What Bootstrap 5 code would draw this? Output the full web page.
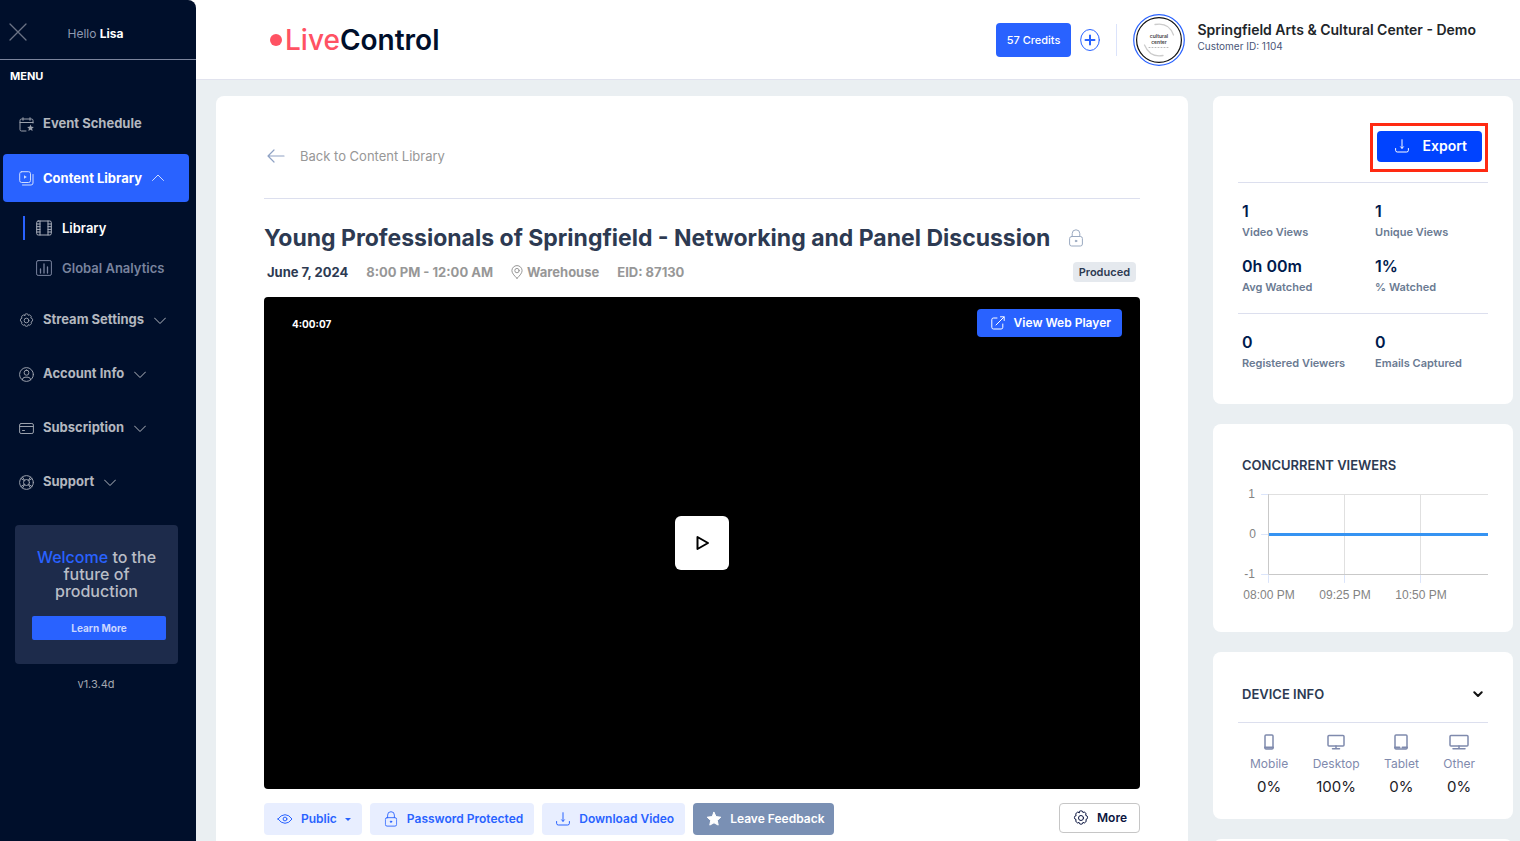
<!DOCTYPE html>
<html lang="en">
<head>
<meta charset="utf-8">
<meta name="viewport" content="width=device-width, initial-scale=1">
<title>LiveControl - Content Library</title>
<link href="https://cdn.jsdelivr.net/npm/bootstrap@5.3.0/dist/css/bootstrap.min.css" rel="stylesheet">
<style>
:root{--lc-blue:#2962ff;--lc-navy:#000f2b;--lc-ink:#2d3a52;--lc-line:#dcdfee;--lc-gray:#979797}
body{font-family:Inter,"Liberation Sans",sans-serif;font-size:14px;line-height:20px;background:#eaeff2;color:#212529}
svg{display:block;flex:none;fill:none;stroke:currentColor;stroke-linecap:round;stroke-linejoin:round}
a{text-decoration:none;color:inherit}
.btn{display:inline-flex;align-items:center;font-weight:600;font-size:12px;line-height:16px;border-radius:4px;white-space:nowrap}
.shell{height:100vh}
.corner{background:#fff}
.side{width:196px;flex:none;background:var(--lc-navy);border-radius:0 8px 0 0;height:100vh;overflow:hidden}
.side-head{height:60px;padding-top:5px;border-bottom:1px solid #7b849c;color:#8f98b0;font-size:12px}
.side-head .x-btn{background:none;border:0;padding:0;margin-left:9px;color:#6b7385}
.side-title{font-size:11px;line-height:16px;padding:8px 10px 0}
.side-nav{margin-top:15px;gap:6px}
.side-nav > a:first-child{margin-bottom:1px}
.side-link{height:48px;margin:0 7px 0 3px;padding:0 16px;border-radius:4px;font-weight:700;font-size:13px;color:#b3b7bf}
.side-link .ico{margin:2px 9px 0 0;color:#9aa0ac}
.side-link .chev{margin:3px 0 0 10px}
.side-link.current{background:var(--lc-blue);color:#fff}
.side-link.current svg{color:#cfdcff;margin-top:0}
.side-sub{padding-bottom:1px}
.side-sub a{height:40px;padding-left:36px;font-weight:600;font-size:13px;color:#79839e}
.side-sub a svg{margin-right:10px}
.side-sub a.on{color:#fff;padding-left:0}
.side-sub a.on svg{color:#aab0bd}
.side-sub a.on::before{content:"";width:2px;height:24px;background:var(--lc-blue);margin:0 11px 0 23px}
.promo{margin:20px 18px 0 15px;padding:24px 12px 24px 17px;background:#1d2b4b;border-radius:4px;color:#b9bdc6;text-align:center}
.promo p{font-size:16px;line-height:17px;font-weight:500;margin:0 5px 16px 0}
.promo p span{color:var(--lc-blue)}
.promo .btn{background:var(--lc-blue);color:#c9d6ff;font-size:10px;font-weight:700;line-height:14px;padding:5px;border:0;border-radius:2px;justify-content:center}
.ver{font-size:11px;color:#a3a7af;margin-top:10px;padding-right:4px}
.topbar{height:80px;background:#fff;border-bottom:1px solid #e1e3ee;padding:0 44px 0 74px}
.logo{font-size:28px;line-height:32px;font-weight:600;color:var(--lc-navy)}
.logo span{color:#ff5263;font-weight:500}
.logo i{width:12px;height:12px;border-radius:50%;background:#ff5263;margin-right:3px}
.credits{background:var(--lc-blue);color:#fff;font-size:11px;font-weight:500;padding:9px 11px;border:0}
.plus{border:0;background:none;padding:0;color:var(--lc-blue);margin-left:8px}
.vline{width:1px;height:32px;background:#dbe3fb;margin:0 16px 0 15px}
.org-box{padding:0 0 5px 4px}
.org{font-size:14px;line-height:18px;font-weight:600}
.cust{font-size:10px;line-height:14px;color:#4a5578}
.board{padding:16px 7px 0 20px;gap:25px;overflow-y:auto;scrollbar-width:none}
.board::-webkit-scrollbar{display:none}
.panel{background:#fff;border-radius:8px}
.main-panel{padding:48px 48px 20px}
.back{color:var(--lc-gray);font-size:13px;line-height:24px;padding-left:3px;gap:15px}
.back svg{color:#8fa2c4}
.rule{border-top:1px solid var(--lc-line)}
.rule-top{margin-top:30px;padding-top:23px}
.ttl{font-size:23px;line-height:32px;font-weight:700;color:var(--lc-ink);margin:0}
.meta{font-size:13px;font-weight:700;color:var(--lc-gray);padding-left:3px;gap:18px;margin:8px 0 15px}
.meta .when{color:var(--lc-ink)}
.tag{background:#e5e9ee;color:var(--lc-ink);font-size:11px;line-height:20px;font-weight:600;border-radius:4px;padding:0 6px}
.video{background:#000;border-radius:4px;aspect-ratio:876/492;padding:12px 18px 0 28px}
.video .time{color:#fff;font-size:10px;font-weight:700;line-height:30px}
.btn-web{background:var(--lc-blue);color:#fff;padding:6px 11px 6px 14px;border:0;gap:9px}
.play{width:54px;height:54px;border:0;background:#fff;border-radius:6px;color:#000}
.actions{padding-top:14px}
.btn-soft{background:#e8eeff;color:var(--lc-blue);padding:8px 11px 8px 13px;border:0;gap:8px}
.btn-fb{background:#7a90b4;color:#fff;padding:8px 10px 8px 13px;border:0;gap:8px}
.btn-more{background:#fff;border:1px solid #c6c6c6;color:#0b1540;padding:6px 12px;gap:7px}
.aside{width:300px;flex:none;gap:20px}
.side-card{padding:0 25px}
.stats-card{padding-bottom:25px}
.export-row{padding:27px 0 10px}
.mark-box{border:3px solid #ff2a12;padding:5px 3px 7px 4px}
.btn-export{background:#0043ff;color:#fff;font-size:14px;font-weight:600;padding:7px 15px 8px 17px;border:0;gap:13px}
.stats{padding:0 4px}
.stats-mid{padding-top:13px;padding-bottom:18px}
.stats dl{margin:0;width:55%;flex:none}
.stats dt{font-size:11px;line-height:16px;font-weight:600;color:#6a7a92}
.stats dd{margin:0;font-size:16px;line-height:26px;font-weight:600;color:#001a4d}
.rule-stats{padding-top:15px}
.card-h{font-size:13px;line-height:20px;font-weight:600;color:var(--lc-ink);margin:0;padding-left:4px}
.chart-card{padding-top:31px;padding-bottom:28px}
.chart-card .card-h{padding-bottom:7px}
.chart-txt{fill:#838383;stroke:none;font:12px "Liberation Sans",Arial,sans-serif}
.dev-head{padding:32px 5px 18px 0}
.dev{padding:11px 13px 22px 12px}
.dev div{font-size:12px;line-height:18px;color:#7f8aad}
.dev svg{margin:0 auto 5px}
.dev b{display:block;font-size:15px;line-height:20px;font-weight:400;color:#1d2127;margin-top:4px}
</style>
</head>
<body>
<svg width="0" height="0" class="position-absolute" aria-hidden="true">
  <symbol id="down" viewBox="0 0 12 8"><path d="M.5 1l5.500 5.500L11.500 1"/></symbol>
  <symbol id="gear" viewBox="0 0 16 16"><circle cx="8" cy="8" r="2.500"/><path d="M6.600 1.200q1.400-.9 2.800 0l.5 1.300 1.300-.5q1.500.5 1.900 1.900l-.6 1.300 1.600.8q.9 1 0 2.900l-1.300.8.5 1.300q-.6 1.500-2 2l-1.400-.6-.5 1.400q-1.400.9-2.800 0l-.5-1.400-1.400.6q-1.400-.5-2-2l.5-1.300-1.300-.7q-.9-1.400 0-2.900l1.300-.6-.5-1.400q.5-1.500 2-2l1.400.6z"/></symbol>
  <symbol id="lock" viewBox="0 0 14 18"><rect x=".6" y="7.500" width="12.800" height="9.500" rx="2"/><path d="M3.200 7.500V4.600a3.800 3.800 0 0 1 7.600 0v2.900"/><circle cx="7" cy="12" r=".8" fill="currentColor"/></symbol>
  <symbol id="dl" viewBox="0 0 14 14"><path d="M7 .7v8.500M5.600 7.800L7 9.400l1.400-1.600M.6 9.500v1.800q0 1.700 1.700 1.700h9.400q1.700 0 1.700-1.700V9.500"/></symbol>
</svg>
<div class="shell d-flex">
  <div class="corner">
  <aside class="side">
    <div class="side-head d-flex align-items-center">
      <button class="x-btn" aria-label="Close menu"><svg width="18" height="18" viewBox="0 0 18 18" stroke-width="1.300"><path d="M1 1l16 16M17 1L1 17"/></svg></button>
      <div class="mx-auto ps-2 pt-1 pe-3">Hello <b class="text-white">Lisa</b></div>
      <span class="pe-4"></span>
    </div>
    <div class="side-title text-white fw-bold">MENU</div>
    <nav class="side-nav d-flex flex-column" aria-label="Main">
      <a href="#" class="side-link d-flex align-items-center"><svg class="ico" width="15" height="15" viewBox="0 0 15 15"><path d="M14 6V3.500q0-1.500-1.500-1.500h-10Q1 2 1 3.500v9Q1 14 2.500 14H7M1 5.500h13M4 .7v2.600M11 .7v2.600"/><path fill="currentColor" stroke="none" d="M11.500 7.500l1 2.200 2.400.3-1.800 1.600.5 2.400-2.100-1.200L9.400 14l.5-2.400L8.100 10l2.400-.3z"/></svg>Event Schedule</a>
      <a href="#" class="side-link current d-flex align-items-center"><svg class="ico" width="15" height="15" viewBox="0 0 15 15"><rect x=".7" y=".7" width="10.800" height="10.800" rx="2"/><path d="M14 3.500V12q0 2-2 2H3.500"/><path d="M5 4.300v3.400l2.800-1.700z" fill="currentColor" stroke="none"/></svg>Content Library<svg class="chev" width="12" height="8" viewBox="0 0 12 8"><path d="M.5 6.500L6 1l5.500 5.500"/></svg></a>
      <div class="side-sub">
        <a href="#" class="on d-flex align-items-center"><svg width="16" height="16" viewBox="0 0 16 16"><rect x=".7" y="1" width="14.600" height="14" rx="1.500"/><path d="M4 1v14M12 1v14M1 4h3M1 6.700h3M1 9.400h3M1 12h3M12 4h3M12 6.700h3M12 9.400h3M12 12h3"/></svg>Library</a>
        <a href="#" class="d-flex align-items-center"><svg width="16" height="16" viewBox="0 0 16 16"><rect x=".6" y=".6" width="14.800" height="14.800" rx="1.500"/><path d="M4.500 13V9M8 13V4M11.500 13V7" stroke-width="1.300"/></svg>Global Analytics</a>
      </div>
      <a href="#" class="side-link d-flex align-items-center"><svg class="ico" width="15" height="15"><use href="#gear"/></svg>Stream Settings<svg class="chev" width="12" height="8"><use href="#down"/></svg></a>
      <a href="#" class="side-link d-flex align-items-center"><svg class="ico" width="15" height="15" viewBox="0 0 15 15"><circle cx="7.500" cy="7.500" r="6.900"/><rect x="5.200" y="3.200" width="4.600" height="5" rx="2.200"/><path d="M3.300 12.800q.3-2.600 2.700-2.600h3q2.400 0 2.700 2.600"/></svg>Account Info<svg class="chev" width="12" height="8"><use href="#down"/></svg></a>
      <a href="#" class="side-link d-flex align-items-center"><svg class="ico" width="15" height="15" viewBox="0 0 15 15"><rect x=".6" y="2.500" width="13.800" height="10" rx="1.500"/><path d="M.6 5.500h13.800M3.500 9.500h2"/></svg>Subscription<svg class="chev" width="12" height="8"><use href="#down"/></svg></a>
      <a href="#" class="side-link d-flex align-items-center"><svg class="ico" width="15" height="15" viewBox="0 0 15 15"><circle cx="7.500" cy="7.500" r="6.900"/><circle cx="7.500" cy="7.500" r="3"/><path d="M2 3.500l3.200 2M3.500 2l2 3.200M13 3.500l-3.200 2M11.500 2l-2 3.200M2 11.500l3.200-2M3.500 13l2-3.200M13 11.500l-3.200-2M11.500 13l-2-3.200"/></svg>Support<svg class="chev" width="12" height="8"><use href="#down"/></svg></a>
    </nav>
    <section class="promo">
      <p><span>Welcome</span> to the future of production</p>
      <button class="btn w-100">Learn More</button>
    </section>
    <div class="ver text-center">v1.3.4d</div>
  </aside>
  </div>

  <div class="flex-grow-1 d-flex flex-column" style="min-width:0">
    <header class="topbar d-flex align-items-center flex-shrink-0">
      <a href="#" class="logo d-flex align-items-center"><i></i><span>Live</span>Control</a>
      <button class="btn credits ms-auto">57 Credits</button>
      <button class="plus" aria-label="Add credits"><svg width="22" height="24" viewBox="0 0 22 24"><ellipse cx="11" cy="12" rx="9.300" ry="10.500"/><path d="M6.500 12h9M11 7.500v9" stroke-width="2"/></svg></button>
      <span class="vline"></span>
      <svg class="me-2" width="52" height="52" viewBox="0 0 52 52" role="img" aria-label="Cultural Center"><circle cx="26" cy="26" r="25.300" stroke="#2962ff" stroke-width="1.200"/><circle cx="26" cy="26" r="22.400" stroke="#111" stroke-width="1.200"/><path d="M22 10.500Q36 8 40.500 21M11.500 31Q17 44 30 41.500" stroke="#ccc" stroke-width="1.300"/><g fill="#444" stroke="none" font-size="5" font-weight="600" text-anchor="middle"><text x="26" y="24">cultural</text><text x="26" y="30">center</text></g><path d="M16 33.500h20" stroke="#bbb" stroke-dasharray="1 2"/></svg>
      <div class="org-box"><div class="org">Springfield Arts &amp; Cultural Center - Demo</div><div class="cust">Customer ID: 1104</div></div>
    </header>

    <div class="board d-flex align-items-start flex-grow-1">
      <main class="panel main-panel flex-grow-1">
        <a href="#" class="back d-inline-flex align-items-center"><svg width="18" height="14" viewBox="0 0 18 14" stroke-width="1.200"><path d="M17 7H1M7 1L1 7l6 6"/></svg>Back to Content Library</a>
        <div class="rule rule-top"></div>
        <div class="d-flex align-items-center gap-3"><h1 class="ttl">Young Professionals of Springfield - Networking and Panel Discussion</h1><svg width="20" height="18" style="color:#9aa9c0"><use href="#lock"/></svg></div>
        <div class="meta d-flex align-items-center">
          <span class="when">June 7, 2024</span><span>8:00 PM - 12:00 AM</span>
          <span class="d-flex align-items-center gap-1"><svg width="12" height="14" viewBox="0 0 12 14"><path d="M6 13.300Q.9 8.600.9 5.700a5.100 5.100 0 0 1 10.200 0Q11.100 8.600 6 13.300z"/><circle cx="6" cy="5.600" r="2.200"/></svg>Warehouse</span><span>EID: 87130</span>
          <span class="tag ms-auto me-1">Produced</span>
        </div>
        <section class="video position-relative" aria-label="Video player">
          <div class="d-flex justify-content-between align-items-start"><span class="time">4:00:07</span>
          <button class="btn btn-web"><svg width="14" height="14" viewBox="0 0 14 14"><path d="M6 2H2.500Q.8 2 .8 3.700v7.600q0 1.700 1.700 1.700h7.600q1.700 0 1.700-1.700V8M9.500.8h3.700v3.700M13 1L5 9"/></svg>View Web Player</button></div>
          <button class="play position-absolute top-50 start-50 translate-middle d-flex align-items-center justify-content-center" aria-label="Play"><svg width="14" height="16" viewBox="0 0 14 16" stroke-width="2"><path d="M2.500 2v12L13 8z"/></svg></button>
        </section>
        <div class="d-flex align-items-start gap-2 actions">
          <button class="btn btn-soft"><svg width="16" height="10" viewBox="0 0 16 10"><path d="M1 5q3-4.300 7-4.300T15 5q-3 4.300-7 4.300T1 5z"/><circle cx="8" cy="5" r="1.900"/></svg>Public<svg width="6" height="3" viewBox="0 0 6 3"><path d="M0 0h6L3 3z" fill="currentColor" stroke="none"/></svg></button>
          <button class="btn btn-soft"><svg width="16" height="16" viewBox="0 0 14 18"><use href="#lock"/></svg>Password Protected</button>
          <button class="btn btn-soft"><svg width="16" height="14"><use href="#dl"/></svg>Download Video</button>
          <button class="btn btn-fb"><svg width="16" height="16" viewBox="0 0 16 16"><path fill="currentColor" d="M8 1.300l2 4.300 4.800.6-3.500 3.200.9 4.700L8 11.800l-4.200 2.300.9-4.700L1.200 6.200 6 5.600z"/></svg>Leave Feedback</button>
          <button class="btn btn-more ms-auto"><svg width="18" height="16"><use href="#gear"/></svg>More</button>
        </div>
      </main>

      <aside class="aside d-flex flex-column">
        <section class="panel side-card stats-card">
          <div class="d-flex justify-content-end export-row"><div class="mark-box"><button class="btn btn-export"><svg width="16" height="14"><use href="#dl"/></svg>Export</button></div></div>
          <div class="rule rule-stats"></div>
          <div class="stats d-flex"><dl class="d-flex flex-column-reverse"><dt>Video Views</dt><dd>1</dd></dl><dl class="d-flex flex-column-reverse"><dt>Unique Views</dt><dd>1</dd></dl></div>
          <div class="stats stats-mid d-flex"><dl class="d-flex flex-column-reverse"><dt>Avg Watched</dt><dd>0h 00m</dd></dl><dl class="d-flex flex-column-reverse"><dt>% Watched</dt><dd>1%</dd></dl></div>
          <div class="rule rule-stats"></div>
          <div class="stats d-flex pb-2"><dl class="d-flex flex-column-reverse"><dt>Registered Viewers</dt><dd>0</dd></dl><dl class="d-flex flex-column-reverse"><dt>Emails Captured</dt><dd>0</dd></dl></div>
        </section>
        <section class="panel side-card chart-card">
          <h2 class="card-h">CONCURRENT VIEWERS</h2>
          <svg class="w-100" height="122" viewBox="0 0 250 122" role="img" aria-label="Concurrent viewers over time">
            <path stroke="#e0e0e0" d="M30.500 12.500H250M106.500 12.500v80M182.500 12.500v80"/>
            <path stroke="#c9c9c9" d="M30.500 12.500v80H250"/>
            <path stroke="#dbe5fb" d="M23.500 12.500h6M23.500 52.500h6M23.500 92.500h6M30.500 93.500v7M106.500 93.500v7M182.500 93.500v7"/>
            <path stroke="#3593f2" stroke-width="3" stroke-linecap="butt" d="M31 52.500h219"/>
            <g class="chart-txt"><g text-anchor="end"><text x="17" y="16">1</text><text x="18" y="56">0</text><text x="17" y="96">-1</text></g>
            <g text-anchor="middle"><text x="31" y="117">08:00 PM</text><text x="107" y="117">09:25 PM</text><text x="183" y="117">10:50 PM</text></g></g>
          </svg>
        </section>
        <section class="panel side-card">
          <div class="dev-head d-flex align-items-center justify-content-between"><h2 class="card-h">DEVICE INFO</h2><svg width="10" height="7" viewBox="0 0 10 7" stroke-width="2" style="color:#111"><path d="M1.300 1.300L5 5l3.700-3.700"/></svg></div>
          <div class="rule"></div>
          <div class="dev d-flex justify-content-between text-center">
            <div><svg width="18" height="16" viewBox="0 0 18 16" stroke-width="1.500"><rect x="5" y="1" width="8" height="14" rx="1"/><path d="M5 13.500h8" stroke-width="2"/></svg>Mobile<b>0%</b></div>
            <div><svg width="18" height="16" viewBox="0 0 18 16" stroke-width="1.500"><rect x="1" y="1.500" width="16" height="10.500" rx="1"/><path d="M9 12v2.500M5.500 14.700h7"/></svg>Desktop<b>100%</b></div>
            <div><svg width="18" height="16" viewBox="0 0 18 16" stroke-width="1.500"><rect x="3" y="1" width="12" height="14" rx="1"/><path d="M3 13.500h4.500M10.500 13.500H15" stroke-width="2"/></svg>Tablet<b>0%</b></div>
            <div><svg width="20" height="16" viewBox="0 0 20 16" stroke-width="1.500"><rect x="1" y="1.500" width="18" height="10.500" rx="1"/><path d="M10 12v2.500M4 14.700h12"/></svg>Other<b>0%</b></div>
          </div>
        </section>
        <section class="panel side-card py-5"></section>
      </aside>
    </div>
  </div>
</div>
<script src="https://cdn.jsdelivr.net/npm/bootstrap@5.3.0/dist/js/bootstrap.bundle.min.js"></script>
</body>
</html>
